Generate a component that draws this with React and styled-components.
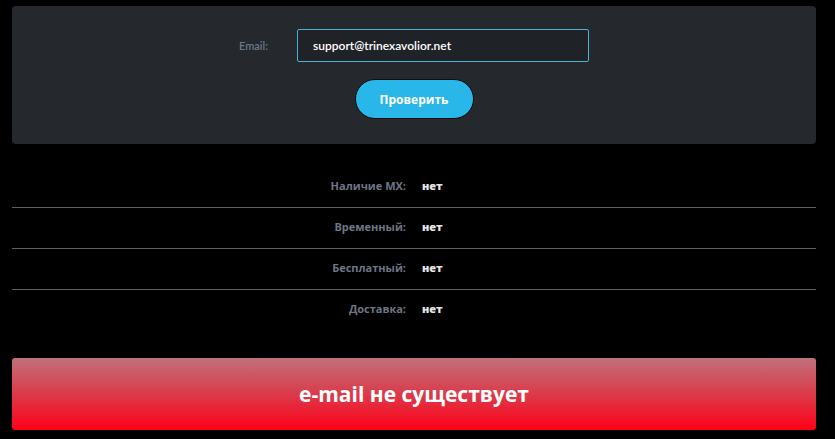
import React from "react";
import styled, { createGlobalStyle } from "styled-components";

const GlobalStyle = createGlobalStyle`
  html, body {
    margin: 0;
    padding: 0;
    background: #000;
  }
  body {
    font-family: "Open Sans", Lato, "Noto Sans", sans-serif;
  }
  * {
    box-sizing: border-box;
  }
`;

const Page = styled.div`
  padding: 6px 19px 9px 12px;
  background: #000;
  min-height: 439px;
`;

const FormPanel = styled.form`
  background: #25282d;
  border-radius: 4px;
  padding: 23px 0 25px;
  display: flex;
  flex-direction: column;
  align-items: center;
  gap: 17px;
`;

const FieldRow = styled.div`
  display: flex;
  align-items: center;
  gap: 29px;
`;

const FieldLabel = styled.label`
  color: #6b7888;
  font-family: Lato, "Open Sans", sans-serif;
  font-size: 11px;
  font-weight: 600;
`;

const EmailInput = styled.input`
  width: 292px;
  height: 33px;
  background: #1f2226;
  border: 1px solid #4fb0dc;
  border-radius: 2px;
  padding: 0 15px;
  color: #fff;
  font-family: Lato, "Open Sans", sans-serif;
  font-size: 12px;
  font-weight: 600;
  outline: none;
`;

const CheckButton = styled.button`
  width: 119px;
  height: 40px;
  border-radius: 20px;
  border: 1px solid #0a0a0a;
  background: #29b6e8;
  color: #fff;
  font-family: "Open Sans", Lato, sans-serif;
  font-size: 12px;
  font-weight: 700;
  cursor: pointer;
`;

const Results = styled.div`
  margin-top: 23px;
`;

const ResultRow = styled.div`
  display: grid;
  grid-template-columns: 1fr 1fr;
  column-gap: 16px;
  align-items: center;
  height: ${(p) => (p.$last ? "40px" : "41px")};
  padding-bottom: 3px;
  border-bottom: ${(p) => (p.$last ? "none" : "1px solid #5c5f6a")};
`;

const ResultLabel = styled.span`
  text-align: right;
  color: #6e7585;
  font-size: 11px;
  font-weight: 700;
`;

const ResultValue = styled.span`
  color: #e6e6e6;
  font-size: 11px;
  font-weight: 800;
`;

const Verdict = styled.div`
  margin-top: 28px;
  height: 72px;
  border-radius: 3px;
  background: linear-gradient(180deg, #c0717c 0%, #d8404f 45%, #ff0018 100%);
  display: flex;
  align-items: center;
  justify-content: center;
  color: #fff;
  font-size: 21px;
  font-weight: 700;
`;

const rows = [
  { label: "Наличие MX:", value: "нет" },
  { label: "Временный:", value: "нет" },
  { label: "Бесплатный:", value: "нет" },
  { label: "Доставка:", value: "нет" },
];

export default function App() {
  return (
    <>
      <GlobalStyle />
      <Page>
        <FormPanel onSubmit={(e) => e.preventDefault()}>
          <FieldRow>
            <FieldLabel htmlFor="email">Email:</FieldLabel>
            <EmailInput
              id="email"
              type="text"
              defaultValue="support@trinexavolior.net"
            />
          </FieldRow>
          <CheckButton type="submit">Проверить</CheckButton>
        </FormPanel>
        <Results>
          {rows.map((r, i) => (
            <ResultRow key={r.label} $last={i === rows.length - 1}>
              <ResultLabel>{r.label}</ResultLabel>
              <ResultValue>{r.value}</ResultValue>
            </ResultRow>
          ))}
        </Results>
        <Verdict>e-mail не существует</Verdict>
      </Page>
    </>
  );
}
